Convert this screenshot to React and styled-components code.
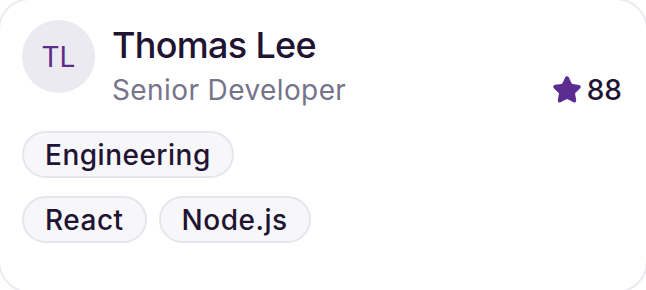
import React from 'react';
import styled, { createGlobalStyle } from 'styled-components';
import { Star } from 'lucide-react';

const GlobalStyle = createGlobalStyle`
  html, body {
    margin: 0;
    padding: 0;
    background: #ffffff;
    overflow: hidden;
  }
  body {
    font-family: Inter, "Noto Sans", sans-serif;
  }
`

const Card = styled.div`
  box-sizing: border-box;
  width: 650px;
  height: 295px;
  margin: -2px -2px;
  padding: 20px 24px 0 22px;
  border: 2px solid #ebeaf0;
  border-radius: 32px;
  background: #ffffff;
  display: flex;
  flex-direction: column;
  gap: 23px;
`
const Header = styled.div`
  display: flex;
  align-items: flex-start;
  gap: 17px;
`
const Avatar = styled.div`
  flex: none;
  width: 73px;
  height: 73px;
  border-radius: 50%;
  background: #ebeaf0;
  color: #5b2c8a;
  font-size: 28px;
  font-weight: 400;
  display: flex;
  align-items: center;
  justify-content: center;
`
const Info = styled.div`
  flex: 1;
  padding-top: 3px;
  display: flex;
  flex-direction: column;
  gap: 5px;
`
const Name = styled.div`
  font-size: 36px;
  font-weight: 500;
  line-height: 44px;
  color: #211332;
  letter-spacing: -0.7px;
`
const SubRow = styled.div`
  display: flex;
  align-items: center;
  justify-content: space-between;
`
const Role = styled.div`
  font-size: 28px;
  line-height: 36px;
  color: #76748a;
  letter-spacing: 0.4px;
`
const Rating = styled.div`
  display: flex;
  align-items: center;
  gap: 5px;
  font-size: 28px;
  line-height: 36px;
  font-weight: 500;
  color: #211332;
`
const Tags = styled.div`
  display: flex;
  flex-direction: column;
  align-items: flex-start;
  gap: 18px;
`
const TagRow = styled.div`
  display: flex;
  gap: 12px;
`
const Tag = styled.span`
  box-sizing: border-box;
  height: 47px;
  padding: 0 21px;
  display: inline-flex;
  align-items: center;
  border: 2px solid #e6e5eb;
  border-radius: 24px;
  background: #f7f7fa;
  font-size: 28px;
  font-weight: 500;
  letter-spacing: 0.5px;
  color: #211332;
`

export default function App() {
  return (
    <>
      <GlobalStyle />
      <Card>
        <Header>
          <Avatar>TL</Avatar>
          <Info>
            <Name>Thomas Lee</Name>
            <SubRow>
              <Role>Senior Developer</Role>
              <Rating>
                <Star size={30} color="#5b2c91" fill="#5b2c91" strokeWidth={2} />
                88
              </Rating>
            </SubRow>
          </Info>
        </Header>
        <Tags>
          <TagRow>
            <Tag>Engineering</Tag>
          </TagRow>
          <TagRow>
            <Tag>React</Tag>
            <Tag>Node.js</Tag>
          </TagRow>
        </Tags>
      </Card>
    </>
  );
}
